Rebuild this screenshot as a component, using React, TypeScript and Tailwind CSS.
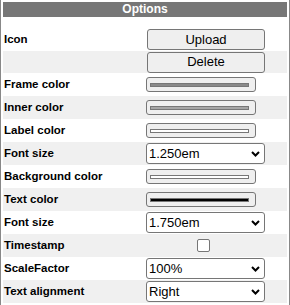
import React from 'react';

type Row =
  | { label: string; kind: 'button'; text: string }
  | { label: string; kind: 'color'; fill: string }
  | { label: string; kind: 'select'; value: string }
  | { label: string; kind: 'check' };

const rows: Row[] = [
  { label: 'Icon', kind: 'button', text: 'Upload' },
  { label: '', kind: 'button', text: 'Delete' },
  { label: 'Frame color', kind: 'color', fill: '#8a8a8a' },
  { label: 'Inner color', kind: 'color', fill: '#a6a6a6' },
  { label: 'Label color', kind: 'color', fill: '#ffffff' },
  { label: 'Font size', kind: 'select', value: '1.250em' },
  { label: 'Background color', kind: 'color', fill: '#ffffff' },
  { label: 'Text color', kind: 'color', fill: '#000000' },
  { label: 'Font size', kind: 'select', value: '1.750em' },
  { label: 'Timestamp', kind: 'check' },
  { label: 'ScaleFactor', kind: 'select', value: '100%' },
  { label: 'Text alignment', kind: 'select', value: 'Right' },
];

const Chevron = () => (
  <svg width="9" height="6" viewBox="0 0 9 6" className="shrink-0">
    <path d="M1 1 L4.5 4.5 L8 1" fill="none" stroke="#000" strokeWidth="2" />
  </svg>
);

const Control = ({ row }: { row: Row }) => {
  if (row.kind === 'button') {
    return (
      <div className="ml-[1px] w-[118px] h-[21px] border border-[#767676] rounded-[3px] bg-[#efefef] text-[13px] text-black flex items-center justify-center">
        {row.text}
      </div>
    );
  }
  if (row.kind === 'color') {
    return (
      <div className="w-[110px] h-[15px] border border-[#767676] rounded-[3px] bg-[#efefef] pl-[3px] pr-[6px] flex items-center">
        <div className="w-full h-[4px] border border-[#777]" style={{ backgroundColor: row.fill }} />
      </div>
    );
  }
  if (row.kind === 'select') {
    return (
      <div className="w-[119px] h-[21px] border border-[#767676] rounded-[3px] bg-white pl-[2px] pr-[4px] flex items-center justify-between text-[13px] text-black">
        <span>{row.value}</span>
        <Chevron />
      </div>
    );
  }
  return <div className="ml-[51px] w-[13px] h-[13px] border border-[#767676] rounded-[2px] bg-white" />;
};

const App = () => {
  return (
    <div className="w-[290px] h-[305px] bg-white border-x border-[#888] px-[2px] pt-[2px] font-['Liberation_Sans',Arial,sans-serif]">
      {/* Header */}
      <div className="h-[15px] bg-[#777] text-white font-bold text-[12px] leading-[15px] text-center">Options</div>

      <div className="h-[11px]" />

      {/* Option rows */}
      {rows.map((row, i) => (
        <div
          key={i}
          className={`flex items-center ${i === 1 ? 'h-[22px]' : 'h-[23px]'} ${i % 2 === 1 ? 'bg-[#f0f0f0]' : 'bg-white'}`}
        >
          <div className="w-[142px] pl-[1px] text-[11.5px] font-bold text-black">{row.label}</div>
          <div className="pl-[1px]">
            <Control row={row} />
          </div>
        </div>
      ))}
    </div>
  );
};

export default App;
